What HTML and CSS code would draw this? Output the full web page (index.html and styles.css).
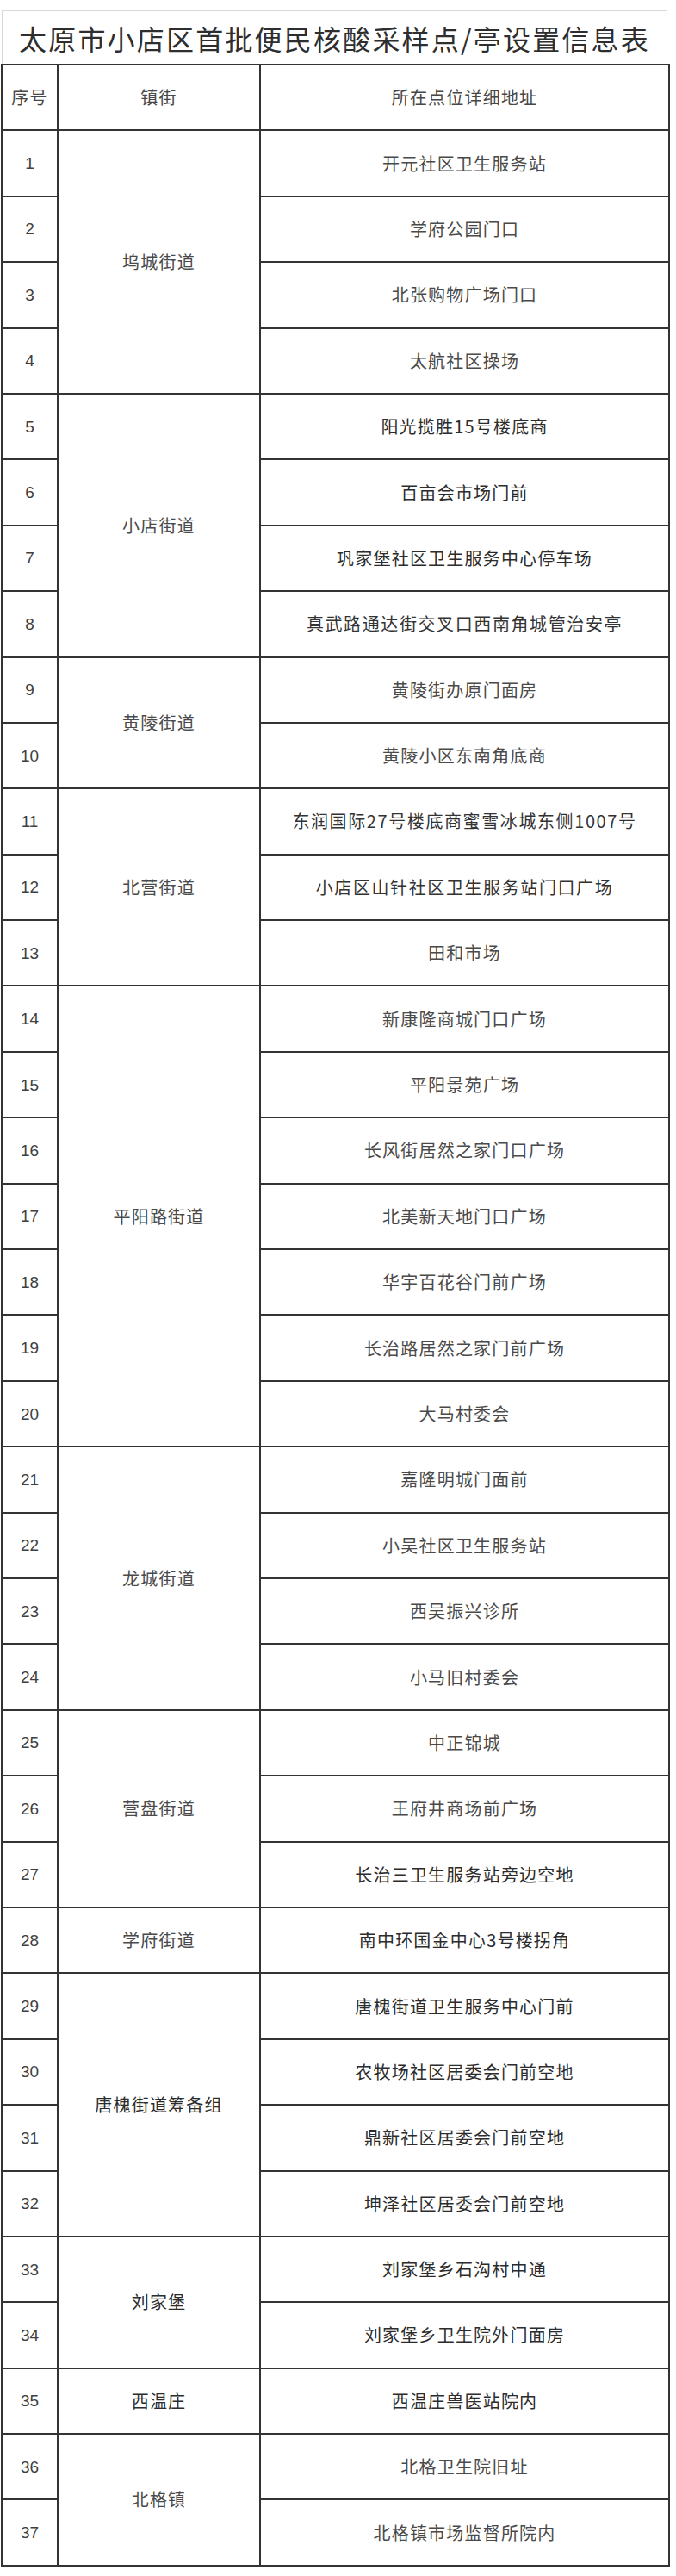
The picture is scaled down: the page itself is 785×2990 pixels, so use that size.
FILE: index.html
```html
<!DOCTYPE html>
<html lang="zh-CN">
<head>
<meta charset="utf-8">
<title>太原市小店区首批便民核酸采样点/亭设置信息表</title>
<link rel="stylesheet" href="styles.css">
</head>
<body>
<div class="page">
  <div class="sheet">
    <div class="title">太原市小店区首批便民核酸采样点/亭设置信息表</div>
    <table class="grid">
      <colgroup>
        <col class="c-no">
        <col class="c-town">
        <col class="c-addr">
      </colgroup>
      <thead>
        <tr class="head">
          <th>序号</th>
          <th>镇街</th>
          <th>所在点位详细地址</th>
        </tr>
      </thead>
      <tbody>
        <tr><td class="no">1</td><td class="town" rowspan="4">坞城街道</td><td>开元社区卫生服务站</td></tr>
        <tr><td class="no">2</td><td>学府公园门口</td></tr>
        <tr><td class="no">3</td><td>北张购物广场门口</td></tr>
        <tr><td class="no">4</td><td>太航社区操场</td></tr>

        <tr><td class="no">5</td><td class="town" rowspan="4">小店街道</td><td class="dark">阳光揽胜15号楼底商</td></tr>
        <tr><td class="no">6</td><td class="dark">百亩会市场门前</td></tr>
        <tr><td class="no">7</td><td class="dark">巩家堡社区卫生服务中心停车场</td></tr>
        <tr><td class="no">8</td><td class="dark song">真武路通达街交叉口西南角城管治安亭</td></tr>

        <tr><td class="no">9</td><td class="town" rowspan="2">黄陵街道</td><td>黄陵街办原门面房</td></tr>
        <tr><td class="no">10</td><td>黄陵小区东南角底商</td></tr>

        <tr><td class="no">11</td><td class="town" rowspan="3">北营街道</td><td class="dark song">东润国际27号楼底商蜜雪冰城东侧1007号</td></tr>
        <tr><td class="no">12</td><td class="dark song">小店区山针社区卫生服务站门口广场</td></tr>
        <tr><td class="no">13</td><td>田和市场</td></tr>

        <tr><td class="no">14</td><td class="town" rowspan="7">平阳路街道</td><td>新康隆商城门口广场</td></tr>
        <tr><td class="no">15</td><td>平阳景苑广场</td></tr>
        <tr><td class="no">16</td><td>长风街居然之家门口广场</td></tr>
        <tr><td class="no">17</td><td>北美新天地门口广场</td></tr>
        <tr><td class="no">18</td><td>华宇百花谷门前广场</td></tr>
        <tr><td class="no">19</td><td>长治路居然之家门前广场</td></tr>
        <tr><td class="no">20</td><td>大马村委会</td></tr>

        <tr><td class="no">21</td><td class="town" rowspan="4">龙城街道</td><td>嘉隆明城门面前</td></tr>
        <tr><td class="no">22</td><td>小吴社区卫生服务站</td></tr>
        <tr><td class="no">23</td><td>西吴振兴诊所</td></tr>
        <tr><td class="no">24</td><td>小马旧村委会</td></tr>

        <tr><td class="no">25</td><td class="town" rowspan="3">营盘街道</td><td>中正锦城</td></tr>
        <tr><td class="no">26</td><td>王府井商场前广场</td></tr>
        <tr><td class="no">27</td><td class="dark">长治三卫生服务站旁边空地</td></tr>

        <tr><td class="no">28</td><td class="town">学府街道</td><td class="dark">南中环国金中心3号楼拐角</td></tr>

        <tr><td class="no">29</td><td class="town dark" rowspan="4">唐槐街道筹备组</td><td class="dark">唐槐街道卫生服务中心门前</td></tr>
        <tr><td class="no">30</td><td class="dark">农牧场社区居委会门前空地</td></tr>
        <tr><td class="no">31</td><td class="dark">鼎新社区居委会门前空地</td></tr>
        <tr><td class="no">32</td><td class="dark">坤泽社区居委会门前空地</td></tr>

        <tr><td class="no">33</td><td class="town dark" rowspan="2">刘家堡</td><td class="dark">刘家堡乡石沟村中通</td></tr>
        <tr><td class="no">34</td><td class="dark">刘家堡乡卫生院外门面房</td></tr>

        <tr><td class="no">35</td><td class="town dark">西温庄</td><td class="dark">西温庄兽医站院内</td></tr>

        <tr><td class="no">36</td><td class="town" rowspan="2">北格镇</td><td>北格卫生院旧址</td></tr>
        <tr><td class="no">37</td><td>北格镇市场监督所院内</td></tr>
      </tbody>
    </table>
  </div>
</div>
</body>
</html>
```

FILE: styles.css
```css
html, body {
  margin: 0;
  padding: 0;
  background: #ffffff;
}

.page {
  width: 785px;
  padding: 12px 0 0 1px;
  box-sizing: border-box;
  font-family: "Noto Sans CJK SC", "Noto Sans", sans-serif;
  color: #4a4a4a;
}

.sheet {
  width: 775px;
}

.title {
  height: 62px;
  margin-left: 1px;
  width: 773px;
  box-sizing: border-box;
  border: 1px solid #d9d9d9;
  border-bottom: none;
  display: flex;
  align-items: center;
  justify-content: center;
  font-size: 32px;
  letter-spacing: 2.2px;
  color: #2e2e2e;
  line-height: 1;
  white-space: nowrap;
}

.grid {
  width: 775px;
  table-layout: fixed;
  border-collapse: collapse;
  border: 2px solid #333333;
}

.c-no { width: 65px; }
.c-town { width: 235px; }
.c-addr { width: 475px; }

.grid th,
.grid td {
  border: 2px solid #333333;
  padding: 0;
  text-align: center;
  vertical-align: middle;
  font-weight: 400;
  font-size: 20px;
  letter-spacing: 1.2px;
  line-height: 1;
  white-space: nowrap;
}

.grid tr {
  height: 76.4px;
}

.grid th {
  color: #474747;
}

.grid td.no {
  font-family: "Liberation Sans", Arial, sans-serif;
  font-size: 19px;
  letter-spacing: 0;
  color: #3f3f3f;
}

.grid td.town {
  color: #4a4a4a;
}

.grid td.dark {
  color: #2c2c2c;
}

.grid td.song {
  color: #333333;
  letter-spacing: 1.6px;
}
```
